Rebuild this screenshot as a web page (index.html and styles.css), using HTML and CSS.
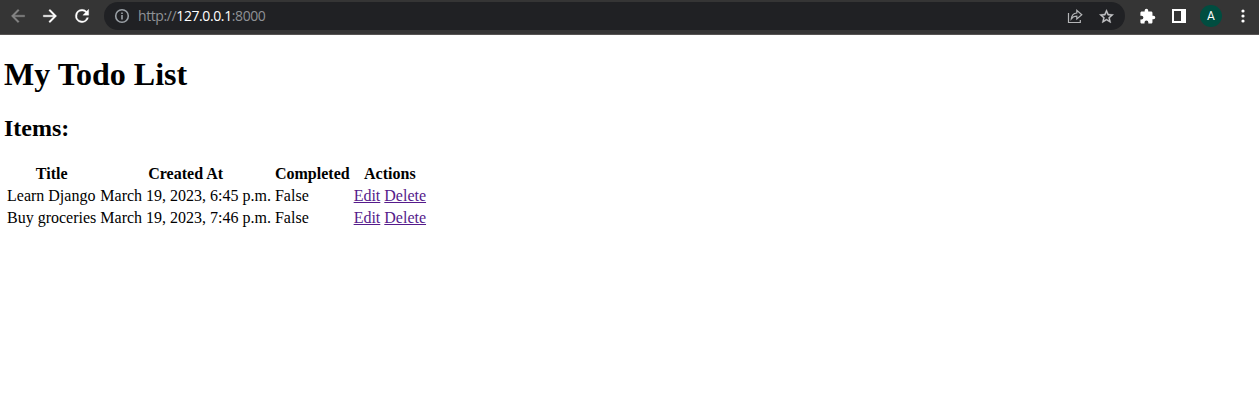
FILE: index.html
```
<!DOCTYPE html>
<html lang="en">
<head>
<meta charset="utf-8">
<title>My Todo List</title>
<link rel="stylesheet" href="styles.css">
</head>
<body>
<header class="toolbar">
  <svg class="icon back" viewBox="0 0 24 24"><path d="M20 11H7.83l5.59-5.59L12 4l-8 8 8 8 1.41-1.41L7.83 13H20z"/></svg>
  <svg class="icon forward" viewBox="0 0 24 24"><path d="M12 4l-1.41 1.41L16.17 11H4v2h12.17l-5.58 5.59L12 20l8-8z"/></svg>
  <svg class="icon reload" viewBox="0 0 24 24"><path d="M17.65 6.35A7.96 7.96 0 0 0 12 4a8 8 0 1 0 7.73 10h-2.08A6 6 0 1 1 12 6c1.66 0 3.14.69 4.22 1.78L13 11h7V4z"/></svg>
  <div class="address">
    <svg class="info" viewBox="0 0 16 16"><circle cx="8" cy="8" r="6.3"/><path d="M8 7v4.5M8 4.4v1.7"/></svg>
    <span class="url">http://<b>127.0.0.1</b>:8000</span>
    <svg class="share" viewBox="0 0 16 16"><path d="M1.500 5v9.500h11.800V12"/><path d="M4.300 10.800C4.700 7.300 6.500 5.300 9.800 5V2.300l5 4.400-5 4.200V8.200C7.300 8.200 5.600 9 4.300 10.800z"/></svg>
    <svg class="star" viewBox="0 0 24 24"><path d="M22 9.24l-7.19-.62L12 2 9.19 8.63 2 9.24l5.46 4.73L5.82 21 12 17.27 18.18 21l-1.63-7.03zM12 15.4l-3.76 2.27 1-4.28-3.32-2.88 4.38-.38L12 6.1l1.71 4.04 4.38.38-3.32 2.88 1 4.28z"/></svg>
  </div>
  <svg class="puzzle" viewBox="0 0 24 24"><path d="M20.5 11H19V7c0-1.1-.9-2-2-2h-4V3.5a2.5 2.5 0 0 0-5 0V5H4c-1.1 0-2 .9-2 2v3.8h1.5a2.7 2.7 0 0 1 0 5.4H2V20c0 1.1.9 2 2 2h3.8v-1.5a2.7 2.7 0 0 1 5.4 0V22H17c1.1 0 2-.9 2-2v-4h1.5a2.5 2.5 0 0 0 0-5z"/></svg>
  <span class="panel"></span>
  <span class="avatar">A</span>
  <svg class="more" viewBox="0 0 4 14"><circle cx="2" cy="2" r="1.6"/><circle cx="2" cy="7" r="1.6"/><circle cx="2" cy="12" r="1.6"/></svg>
</header>
<main class="page">
  <h1>My Todo List</h1>
  <h2>Items:</h2>
  <table class="items">
    <thead><tr><th>Title</th><th>Created At</th><th>Completed</th><th>Actions</th></tr></thead>
    <tbody>
      <tr><td>Learn Django</td><td>March 19, 2023, 6:45 p.m.</td><td>False</td><td><a href="#">Edit</a> <a href="#">Delete</a></td></tr>
      <tr><td>Buy groceries</td><td>March 19, 2023, 7:46 p.m.</td><td>False</td><td><a href="#">Edit</a> <a href="#">Delete</a></td></tr>
    </tbody>
  </table>
</main>
</body>
</html>
```
FILE: styles.css
```
body {
  margin: 0;
  background: #fff;
  color: #000;
  font-family: "Liberation Serif", "Times New Roman", serif;
}
.toolbar {
  display: flex;
  align-items: center;
  box-sizing: border-box;
  height: 35px;
  padding: 0 14px 2px 8px;
  background: #353535;
  border-bottom: 1px solid #565352;
}
.toolbar svg { flex: none; }
.icon {
  width: 20px;
  height: 20px;
  margin-right: 12px;
  fill: #fff;
  stroke: #fff;
  stroke-width: .4;
}
.back { fill: #858585; stroke: #858585; }
.address {
  display: flex;
  align-items: center;
  box-sizing: border-box;
  width: 1021px;
  height: 28px;
  padding: 0 10px;
  border-radius: 14px;
  background: #202124;
}
.info {
  width: 16px;
  height: 16px;
  fill: none;
  stroke: #9aa0a6;
  stroke-width: 1.6;
}
.url {
  flex: 1;
  margin-left: 8px;
  color: #8f9296;
  font: 14px/20px "Open Sans", sans-serif;
  letter-spacing: -.4px;
}
.url b { color: #fff; font-weight: 400; }
.share {
  width: 16px;
  height: 16px;
  margin-right: 15px;
  fill: none;
  stroke: #b4b5b7;
  stroke-width: 1.2;
}
.star { width: 17px; height: 17px; fill: #c5c6c8; stroke: #c5c6c8; stroke-width: .5; }
.puzzle { width: 17px; height: 17px; margin-left: 14px; fill: #fff; }
.panel {
  box-sizing: border-box;
  width: 14px;
  height: 14px;
  margin-left: 16px;
  border: 2px solid #fff;
  border-right-width: 5px;
}
.avatar {
  width: 22px;
  height: 22px;
  margin-left: 14px;
  border-radius: 50%;
  background: #004d40;
  color: #fff;
  font: 12px/22px Roboto, sans-serif;
  text-align: center;
}
.more { width: 4px; height: 14px; margin-left: auto; fill: #fff; }
.page { padding: 0 4px; }
.page::before { content: ""; display: table; }
h1 { margin: 21px 0 22px; font-size: 32px; line-height: 37px; }
h2 { margin: 21px 0 20px; font-size: 24px; line-height: 27px; }
.items { font-size: 16px; line-height: 18px; }
.items a { color: #551a8b; }
```
